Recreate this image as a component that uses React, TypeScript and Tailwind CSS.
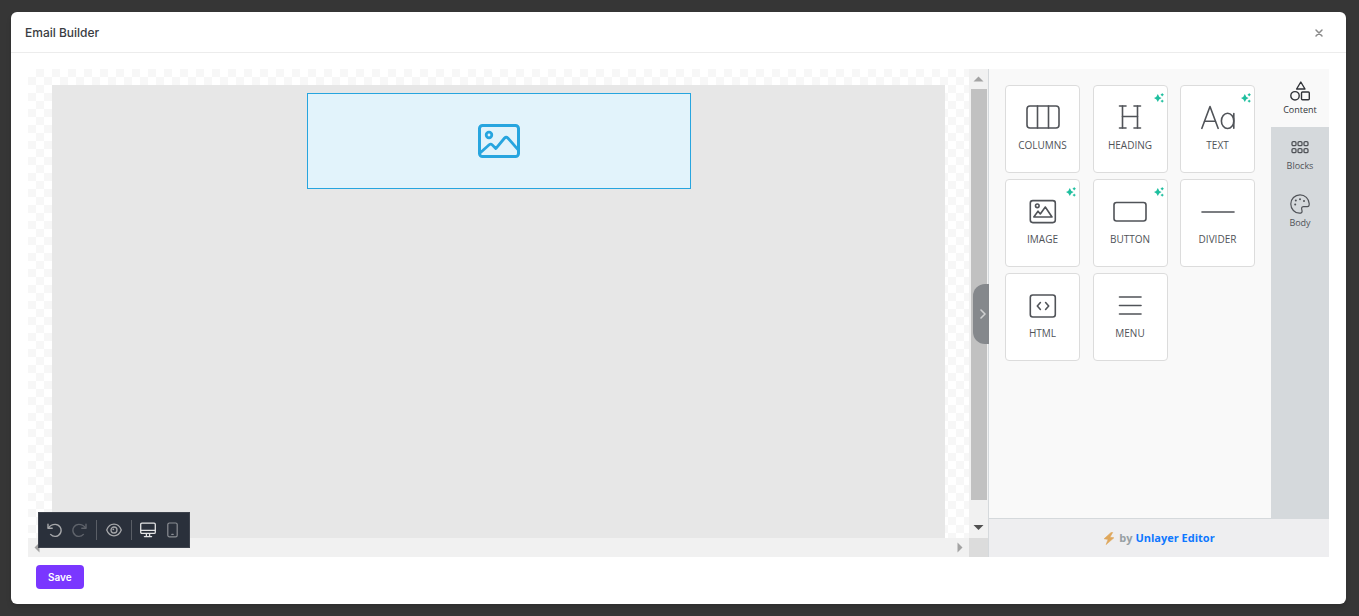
import type { ReactNode } from "react";

const stroke = {
  fill: "none",
  stroke: "currentColor",
  strokeWidth: 1.6,
  strokeLinecap: "round" as const,
  strokeLinejoin: "round" as const,
};

const ColumnsIcon = () => (
  <svg width="34" height="26" viewBox="0 0 34 26" {...stroke} aria-hidden="true">
    <rect x="1" y="2" width="32" height="22" rx="3" />
    <line x1="11.5" y1="2" x2="11.5" y2="24" />
    <line x1="22.5" y1="2" x2="22.5" y2="24" />
  </svg>
);

const HeadingIcon = () => (
  <svg width="34" height="26" viewBox="0 0 34 26" {...stroke} aria-hidden="true">
    <line x1="9.5" y1="2" x2="9.5" y2="24" />
    <line x1="24.5" y1="2" x2="24.5" y2="24" />
    <line x1="9.5" y1="12.5" x2="24.5" y2="12.5" />
    <line x1="6.5" y1="2" x2="13" y2="2" />
    <line x1="21" y1="2" x2="27.5" y2="2" />
    <line x1="6.5" y1="24" x2="13" y2="24" />
    <line x1="21" y1="24" x2="27.5" y2="24" />
  </svg>
);

const TextIcon = () => (
  <svg width="34" height="26" viewBox="0 0 34 26" {...stroke} aria-hidden="true">
    <polyline points="0.9,24.3 9,2.5 17.1,24.3" />
    <line x1="3.6" y1="17.3" x2="14.4" y2="17.3" />
    <ellipse cx="26.6" cy="16.9" rx="6.2" ry="7.6" />
    <line x1="32.8" y1="9.6" x2="32.8" y2="24.3" />
  </svg>
);

const ImageIcon = () => (
  <svg width="34" height="26" viewBox="0 0 34 26" {...stroke} aria-hidden="true">
    <rect x="4.3" y="2.6" width="25" height="22" rx="2.5" />
    <circle cx="11.3" cy="7.8" r="1.8" />
    <path d="M7.8 19 L12 13.2 L14.3 16 L19.3 9 L26 19 Z" />
  </svg>
);

const ButtonIcon = () => (
  <svg width="34" height="26" viewBox="0 0 34 26" {...stroke} aria-hidden="true">
    <rect x="1" y="4.5" width="32" height="18.5" rx="2.5" />
  </svg>
);

const DividerIcon = () => (
  <svg width="34" height="26" viewBox="0 0 34 26" {...stroke} aria-hidden="true">
    <line x1="1" y1="14" x2="33" y2="14" />
  </svg>
);

const HtmlIcon = () => (
  <svg width="34" height="26" viewBox="0 0 34 26" {...stroke} aria-hidden="true">
    <rect x="4.3" y="3" width="25" height="22" rx="2.5" />
    <polyline points="14.4,10.5 11.3,14 14.4,17.5" />
    <polyline points="19.6,10.5 22.7,14 19.6,17.5" />
  </svg>
);

const MenuIcon = () => (
  <svg width="34" height="26" viewBox="0 0 34 26" {...stroke} aria-hidden="true">
    <line x1="6.5" y1="5" x2="28" y2="5" />
    <line x1="6.5" y1="13.5" x2="28" y2="13.5" />
    <line x1="6.5" y1="22" x2="28" y2="22" />
  </svg>
);

const Sparkle = () => (
  <svg
    className="absolute top-[7px] right-[3px] text-[#1fbf9f]"
    width="10"
    height="10"
    viewBox="0 0 10 10"
    fill="currentColor"
    aria-hidden="true"
  >
    <path d="M3.8 1 Q4.6 4.2 7.6 5 Q4.6 5.8 3.8 9 Q3 5.8 0 5 Q3 4.2 3.8 1Z" />
    <path d="M8.2 0 Q8.7 1.2 10 1.7 Q8.7 2.2 8.2 3.4 Q7.7 2.2 6.4 1.7 Q7.7 1.2 8.2 0Z" />
    <path d="M8.2 6.4 Q8.7 7.6 10 8.1 Q8.7 8.6 8.2 9.8 Q7.7 8.6 6.4 8.1 Q7.7 7.6 8.2 6.4Z" />
  </svg>
);

const tools: { label: string; icon: ReactNode; ai?: boolean }[] = [
  { label: "COLUMNS", icon: <ColumnsIcon /> },
  { label: "HEADING", icon: <HeadingIcon />, ai: true },
  { label: "TEXT", icon: <TextIcon />, ai: true },
  { label: "IMAGE", icon: <ImageIcon />, ai: true },
  { label: "BUTTON", icon: <ButtonIcon />, ai: true },
  { label: "DIVIDER", icon: <DividerIcon /> },
  { label: "HTML", icon: <HtmlIcon /> },
  { label: "MENU", icon: <MenuIcon /> },
];

const ShapesIcon = () => (
  <svg width="20" height="20" viewBox="0 0 20 20" {...stroke} strokeWidth={1.4} aria-hidden="true">
    <path d="M10.8 1 L15 8 L6.6 8 Z" />
    <circle cx="5" cy="14.8" r="4.2" />
    <rect x="11.5" y="11" width="7.8" height="7.8" rx="1" />
  </svg>
);

const BlocksIcon = () => (
  <svg width="20" height="20" viewBox="0 0 20 20" {...stroke} strokeWidth={1.3} aria-hidden="true">
    {[2, 8, 14].map((x) => (
      <g key={x}>
        <rect x={x} y="4.6" width="4" height="4" rx="1.2" />
        <rect x={x} y="11.6" width="4" height="4" rx="1.2" />
      </g>
    ))}
  </svg>
);

const PaletteIcon = () => (
  <svg width="20" height="20" viewBox="0 0 20 20" {...stroke} strokeWidth={1.2} aria-hidden="true">
    <path d="M10 0.8 C4.8 0.8 0.8 4.9 0.8 10 C0.8 15.1 4.8 19.2 9.4 19.2 C11.6 19.2 12.4 18.2 12 16.6 C11.4 14.6 11.2 12.6 13.4 12.6 L17.4 12.6 C18.8 12.6 19.3 11.6 19.2 9.6 C18.9 4.7 15 0.8 10 0.8 Z" />
    <g fill="currentColor" stroke="none">
      <circle cx="5.2" cy="10.5" r="1" />
      <circle cx="5.8" cy="6.6" r="1" />
      <circle cx="10" cy="5.2" r="1" />
      <circle cx="14" cy="7" r="1" />
    </g>
  </svg>
);

const tabs = [
  { label: "Content", icon: <ShapesIcon />, active: true },
  { label: "Blocks", icon: <BlocksIcon />, active: false },
  { label: "Body", icon: <PaletteIcon />, active: false },
];

function Toolbar() {
  return (
    <div
      role="toolbar"
      aria-label="Editor"
      className="absolute bottom-[9px] left-[10px] flex h-9 w-[152px] items-center border border-[#3d424c] bg-[#2a303b] pl-[7px] text-[#a7a8ab]"
    >
      <button type="button" aria-label="Undo" className="p-px">
        <svg width="15" height="15" viewBox="0 0 15 15" {...stroke} strokeWidth={1.4} aria-hidden="true">
          <path d="M1 1.2 V5.2 H5.2" />
          <path d="M1.4 5 C3.2 2.4 5.4 1.4 8.2 1.4 A6 6 0 1 1 3.6 11.4" />
        </svg>
      </button>
      <button type="button" aria-label="Redo" className="ml-2 p-px text-[#5f636b]">
        <svg width="15" height="15" viewBox="0 0 15 15" {...stroke} strokeWidth={1.4} aria-hidden="true">
          <path d="M14 1.2 V5.2 H9.8" />
          <path d="M13.6 5 C11.8 2.4 9.6 1.4 6.8 1.4 A6 6 0 1 0 11.4 11.4" />
        </svg>
      </button>
      <span className="ml-2 h-5 w-px bg-[#5a5e66]" />
      <button type="button" aria-label="Preview" className="ml-2 p-px">
        <svg width="16" height="14" viewBox="0 0 16 14" {...stroke} strokeWidth={1.3} aria-hidden="true">
          <path d="M0.7 7 C2.2 3.2 4.8 1.2 8 1.2 C11.2 1.2 13.8 3.2 15.3 7 C13.8 10.8 11.2 12.8 8 12.8 C4.8 12.8 2.2 10.8 0.7 7 Z" />
          <circle cx="8" cy="7" r="3" />
          <circle cx="7.3" cy="6.3" r="0.9" fill="currentColor" stroke="none" />
        </svg>
      </button>
      <span className="ml-2 h-5 w-px bg-[#5a5e66]" />
      <button type="button" aria-label="Desktop" className="ml-[7px] p-px text-[#e4e4e5]">
        <svg width="16" height="16" viewBox="0 0 16 16" {...stroke} strokeWidth={1.3} aria-hidden="true">
          <rect x="0.7" y="1.2" width="14.6" height="10.2" rx="1.2" />
          <path d="M0.7 8.4 H15.3 M6.4 11.6 V14.4 M9.6 11.6 V14.4 M4.4 14.6 H11.6" />
        </svg>
      </button>
      <button type="button" aria-label="Mobile" className="ml-2 p-px text-[#8a8d93]">
        <svg width="13" height="16" viewBox="0 0 13 16" {...stroke} strokeWidth={1.2} aria-hidden="true">
          <rect x="1.8" y="1" width="9.4" height="13.8" rx="1.6" />
          <path d="M5.8 12.4 H7.2" />
        </svg>
      </button>
    </div>
  );
}

function Canvas() {
  return (
    <div className="relative flex min-w-0 flex-1 flex-col">
      <div className="flex min-h-0 flex-1">
        <div className="flex min-w-0 flex-1 bg-[repeating-conic-gradient(#f7f7f7_0_25%,#ffffff_0_50%)] bg-[length:16px_16px] px-6 pt-4">
          <div className="flex-1 bg-[#e7e7e7] pt-2">
            <div className="mx-auto flex h-24 w-96 items-center justify-center border border-[#27a5df] bg-[#e2f3fb] text-[#27a5df]">
              <svg width="44" height="36" viewBox="0 0 44 36" {...stroke} strokeWidth={3} aria-hidden="true">
                <rect x="2.5" y="2.5" width="39" height="31" rx="3" />
                <circle cx="12" cy="12" r="2.8" strokeWidth={2.8} />
                <path d="M3 30 L12.2 21.8 Q13.8 20.4 15.2 21.9 L18.8 25.6 L27.6 15 Q29.2 13.4 30.8 15 L41 26.6" strokeWidth={2.8} />
              </svg>
            </div>
          </div>
        </div>
        <div className="flex w-[19px] flex-col items-center justify-between bg-[#f1f1f1]">
          <svg className="h-5" width="11" height="20" viewBox="0 0 11 20" aria-hidden="true">
            <path d="M5.5 7.5 L10.5 12.5 H0.5 Z" fill="#a3a3a3" />
          </svg>
          <div className="w-4 flex-1 bg-[#c1c1c1]" />
          <svg className="mt-4 h-[22px]" width="11" height="22" viewBox="0 0 11 22" aria-hidden="true">
            <path d="M5.5 14 L10.5 9 H0.5 Z" fill="#505050" />
          </svg>
        </div>
      </div>
      <div className="flex h-[19px]">
        <div className="flex flex-1 items-center justify-between bg-[#f1f1f1] px-[6px]">
          <svg width="6" height="11" viewBox="0 0 6 11" aria-hidden="true">
            <path d="M0.5 5.5 L5.5 0.5 V10.5 Z" fill="#a3a3a3" />
          </svg>
          <svg width="6" height="11" viewBox="0 0 6 11" aria-hidden="true">
            <path d="M5.5 5.5 L0.5 0.5 V10.5 Z" fill="#a3a3a3" />
          </svg>
        </div>
        <div className="w-[19px] bg-[#dcdcdc]" />
      </div>
      <Toolbar />
      <button
        type="button"
        aria-label="Collapse panel"
        className="absolute top-[215px] -right-px flex h-[60px] w-4 items-center justify-center rounded-l-xl bg-[#85888c] pl-1 text-[#cfd0d1]"
      >
        <svg width="6" height="10" viewBox="0 0 6 10" {...stroke} aria-hidden="true">
          <path d="M1 1 L5 5 L1 9" />
        </svg>
      </button>
    </div>
  );
}

function SidePanel() {
  return (
    <aside className="flex w-[341px] shrink-0 flex-col border-l border-[#d5d9dc] font-['Open_Sans',sans-serif]">
      <div className="flex flex-1">
        <div className="flex-1 bg-[#f9f9f9] p-4">
          <div className="grid grid-cols-[repeat(3,75px)] justify-between gap-y-1.5">
            {tools.map((tool) => (
              <button
                key={tool.label}
                type="button"
                className="relative flex h-[88px] flex-col items-center rounded-sm border border-[#dcdcdc] bg-white pt-[18px] text-[#505358]"
              >
                {tool.icon}
                {tool.ai && <Sparkle />}
                <span className="mt-[7px] text-[10px] leading-4">{tool.label}</span>
              </button>
            ))}
          </div>
        </div>
        <nav className="flex w-[58px] flex-col bg-[#d5d9dc]" aria-label="Panels">
          {tabs.map((tab) => (
            <button
              key={tab.label}
              type="button"
              className={
                tab.active
                  ? "flex h-[58px] flex-col items-center bg-[#f9f9f9] pt-3 text-[#303338]"
                  : "flex h-[57px] flex-col items-center pt-[10px] text-[#505358]"
              }
            >
              {tab.icon}
              <span className="mt-px text-[9px] leading-4">{tab.label}</span>
            </button>
          ))}
        </nav>
      </div>
      <footer className="flex h-[39px] items-center justify-center border-t border-[#d5d9dc] bg-[#eeeef0] pt-px text-[11px] font-bold text-[#98a0a4]">
        <svg className="mr-1" width="12" height="13" viewBox="0 0 11 13" aria-hidden="true">
          <path d="M7.6 0.5 L0.6 6.8 L4.6 7.4 L2.6 12.6 L10.4 5.8 L6.4 5.2 L9.2 0.5 Z" fill="#dfa75c" stroke="#dfa75c" strokeWidth="0.6" />
        </svg>
        <span>
          by{" "}
          <a href="#unlayer" className="text-[#0f78ff]">
            Unlayer Editor
          </a>
        </span>
      </footer>
    </aside>
  );
}

export default function App() {
  return (
    <div className="flex min-h-screen flex-col bg-[#363636] py-3 pr-[13px] pl-[11px] font-['Inter',sans-serif]">
      <div role="dialog" aria-labelledby="dialog-title" className="flex flex-1 flex-col rounded-md bg-white shadow-md">
        <header className="flex h-[41px] items-center justify-between border-b border-[#ececec] pt-0.5 pr-[22px] pl-[14px]">
          <h1 id="dialog-title" className="text-[12px] font-medium text-[#3a3d42]">
            Email Builder
          </h1>
          <button type="button" aria-label="Close" className="text-[#8a8a8a]">
            <svg width="10" height="10" viewBox="0 0 10 10" {...stroke} strokeWidth={1.5} aria-hidden="true">
              <path d="M2 2 L8 8 M8 2 L2 8" />
            </svg>
          </button>
        </header>
        <main className="flex flex-1 flex-col px-[17px] pt-4 pb-[15px]">
          <div className="flex flex-1">
            <Canvas />
            <SidePanel />
          </div>
          <button
            type="button"
            className="mt-2 ml-2 h-6 self-start rounded bg-[#7a37ff] px-3 text-[10px] font-semibold text-white"
          >
            Save
          </button>
        </main>
      </div>
    </div>
  );
}
